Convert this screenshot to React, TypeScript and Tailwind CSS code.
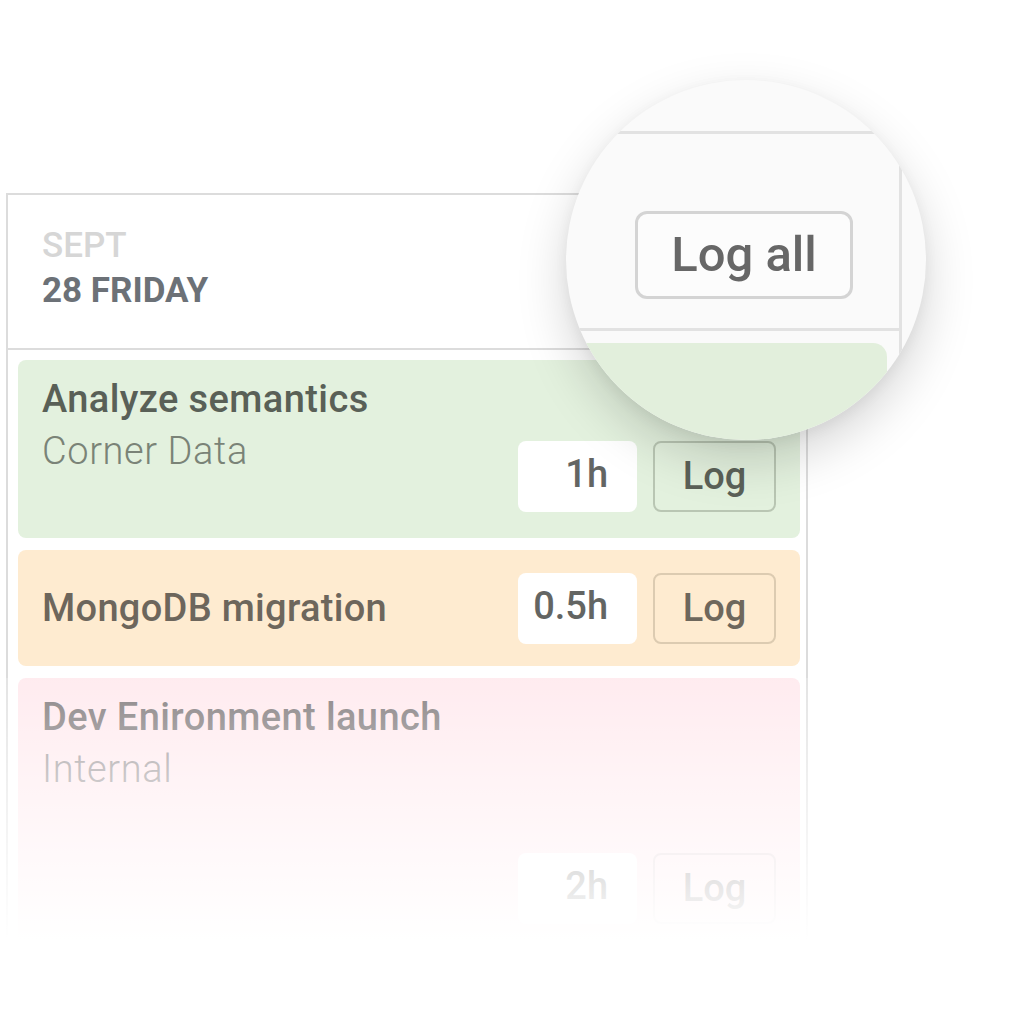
import React from "react";

type Task = {
  title: string;
  client?: string;
  hours: string;
  tone: "green" | "orange" | "pink";
};

const tasks: Task[] = [
  { title: "Analyze semantics", client: "Corner Data", hours: "1h", tone: "green" },
  { title: "MongoDB migration", hours: "0.5h", tone: "orange" },
  { title: "Dev Enironment launch", client: "Internal", hours: "2h", tone: "pink" },
];

const tones = {
  green: {
    card: "bg-[#e3f1de]",
    title: "text-[#596057]",
    client: "text-[#7a8377]",
    log: "border-[#b9c6b3] text-[#5b6158]",
  },
  orange: {
    card: "bg-[#feebd0]",
    title: "text-[#6d665c]",
    client: "text-[#8a8274]",
    log: "border-[#dccbb1] text-[#6e675c]",
  },
  pink: {
    card: "bg-[#ffe6eb]",
    title: "text-[#6b6466]",
    client: "text-[#8c8487]",
    log: "border-[#ddcbcf] text-[#6c6466]",
  },
};

const font = { fontFamily: "Roboto, 'Liberation Sans', sans-serif" };

function HoursControls({ task }: { task: Task }) {
  const t = tones[task.tone];
  return (
    <div className="flex shrink-0">
      <div className="w-[119px] h-[71px] rounded-[8px] bg-white pr-[29px] text-right text-[38px] leading-[67px] font-medium text-[#636563]">
        {task.hours}
      </div>
      <button
        className={`ml-[16px] w-[123px] h-[71px] rounded-[8px] border-2 bg-transparent text-center text-[38px] leading-[65px] font-medium ${t.log}`}
      >
        Log
      </button>
    </div>
  );
}

function TaskCard({ task, tall }: { task: Task; tall?: boolean }) {
  const t = tones[task.tone];

  if (!task.client) {
    return (
      <div className={`h-[116px] rounded-[8px] px-[24px] flex items-center justify-between ${t.card}`}>
        <div className={`text-[38px] leading-[45px] font-medium tracking-[0.3px] ${t.title}`}>{task.title}</div>
        <HoursControls task={task} />
      </div>
    );
  }

  return (
    <div className={`rounded-[8px] pl-[24px] pr-[24px] pt-[17px] pb-[26px] ${t.card}`}>
      <div className={`text-[38px] leading-[45px] font-medium tracking-[0.4px] ${t.title}`}>{task.title}</div>
      {tall ? (
        <>
          <div className={`mt-[7px] text-[38px] leading-[45px] font-light tracking-[0.6px] ${t.client}`}>{task.client}</div>
          <div className="mt-[61px] flex justify-end">
            <HoursControls task={task} />
          </div>
        </>
      ) : (
        <div className="flex justify-between items-start">
          <div className={`mt-[7px] text-[38px] leading-[45px] font-light tracking-[0.6px] ${t.client}`}>{task.client}</div>
          <div className="mt-[19px]">
            <HoursControls task={task} />
          </div>
        </div>
      )}
    </div>
  );
}

/** Magnifier bubble showing the "Log all" action at a larger scale */
function Magnifier() {
  return (
    <div className="absolute left-[566px] top-[80px] w-[360px] h-[360px] rounded-full overflow-hidden bg-[#fafafa] shadow-[0_20px_50px_rgba(0,0,0,0.17),0_4px_14px_rgba(0,0,0,0.05)]">
      <div className="absolute left-[-200px] top-[51px] w-[536px] border-t-[3px] border-r-[3px] border-[#e2e2e2]">
        <div className="h-[197px] border-b-[3px] border-[#e2e2e2] pt-[77px] pr-[46px] flex justify-end items-start">
          <button className="w-[218px] h-[88px] rounded-[12px] border-[3px] border-[#d4d4d4] bg-[#fcfcfc] text-center text-[49px] leading-[78px] font-medium text-[#676767]">
            Log all
          </button>
        </div>
        <div className="pt-[12px] pr-[12px]">
          <div className="h-[140px] rounded-[14px] bg-[#e2efdc]" />
        </div>
      </div>
    </div>
  );
}

export default function App() {
  return (
    <div className="relative w-[1026px] h-[1016px] overflow-hidden bg-white pt-[193px] pl-[6px]" style={font}>
      <div className="w-[802px] h-[900px] border-x-2 border-t-2 border-[#dcdcdc]">
        <div className="h-[155px] border-b-2 border-[#dcdcdc] pl-[34px] pt-[28px]">
          <div className="text-[35px] leading-[45px] font-medium text-[#d6d6d6]">SEPT</div>
          <div className="text-[35px] leading-[45px] font-bold text-[#6c7177]">28 FRIDAY</div>
        </div>
        <div className="pt-[10px] pl-[10px] pr-[6px] flex flex-col gap-[12px]">
          <TaskCard task={tasks[0]} />
          <TaskCard task={tasks[1]} />
          <TaskCard task={tasks[2]} tall />
        </div>
      </div>

      {/* fade-out over the bottom of the list */}
      <div className="absolute left-0 right-0 top-[678px] bottom-0 bg-[linear-gradient(to_bottom,rgba(255,255,255,0.22)_0px,rgba(255,255,255,0.55)_100px,rgba(255,255,255,0.85)_210px,rgba(255,255,255,1)_262px)]" />

      <Magnifier />
    </div>
  );
}
